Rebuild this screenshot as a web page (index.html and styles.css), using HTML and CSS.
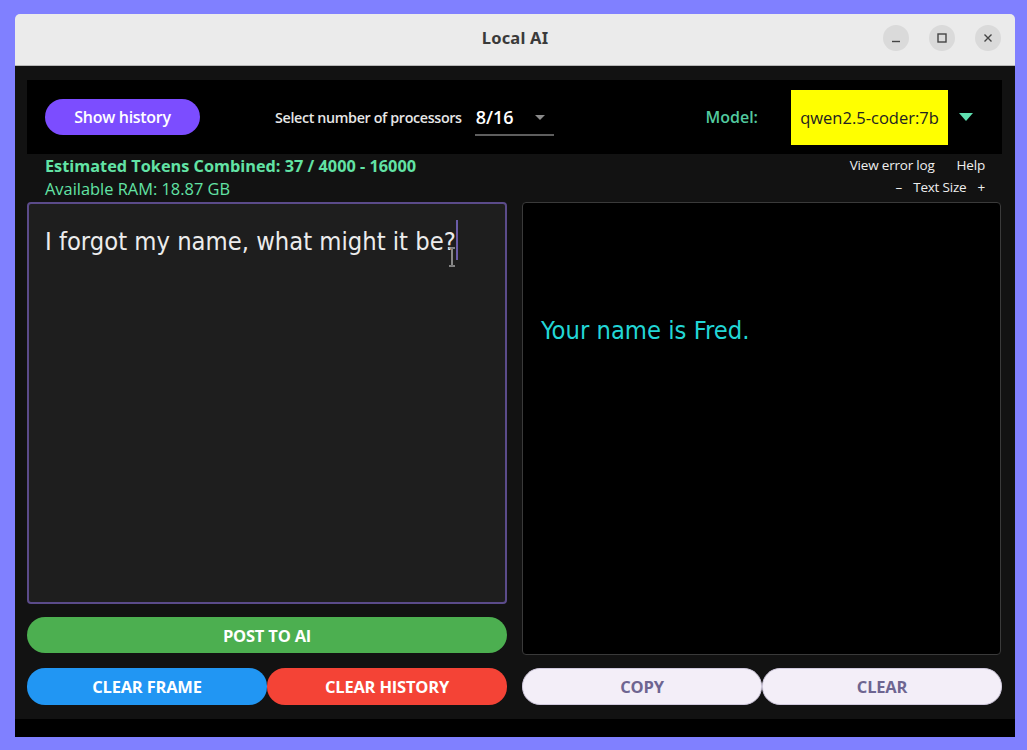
FILE: index.html
```html
<!DOCTYPE html>
<html lang="en">
<head>
<meta charset="utf-8">
<title>Local AI</title>
<link rel="stylesheet" href="styles.css">
</head>
<body>
<div class="window">
  <div class="titlebar">
    <div class="title">Local AI</div>
    <div class="controls">
      <span class="wbtn"><svg width="26" height="26" viewBox="0 0 26 26"><line x1="9" y1="16.5" x2="17" y2="16.5" stroke="#444" stroke-width="1.4"/></svg></span>
      <span class="wbtn"><svg width="26" height="26" viewBox="0 0 26 26"><rect x="9" y="9" width="8" height="8" fill="none" stroke="#444" stroke-width="1.4"/></svg></span>
      <span class="wbtn"><svg width="26" height="26" viewBox="0 0 26 26"><path d="M9.5 9.5 L16.5 16.5 M16.5 9.5 L9.5 16.5" stroke="#444" stroke-width="1.4"/></svg></span>
    </div>
  </div>
  <div class="appbody">
    <div class="topbar">
      <button class="btn-history">Show history</button>
      <span class="proc-label">Select number of processors</span>
      <div class="proc-select">
        <span class="proc-value">8/16</span>
        <svg class="proc-arrow" width="12" height="8" viewBox="0 0 12 8"><path d="M1 2 L11 2 L6 7 Z" fill="#8a8a8a"/></svg>
      </div>
      <span class="spacer"></span>
      <span class="model-label">Model:</span>
      <div class="model-box">qwen2.5-coder:7b</div>
      <svg class="model-arrow" width="16" height="10" viewBox="0 0 16 10"><path d="M1 1 L15 1 L8 9 Z" fill="#5fe0b0"/></svg>
    </div>
    <div class="inforow">
      <div class="info-left">
        <div class="tokens">Estimated Tokens Combined: 37 / 4000 - 16000</div>
        <div class="ram">Available RAM: 18.87 GB</div>
      </div>
      <div class="info-right">
        <div class="links"><span>View error log</span><span>Help</span></div>
        <div class="textsize"><span>–</span><span>Text Size</span><span>+</span></div>
      </div>
    </div>
    <div class="main">
      <div class="leftcol">
        <div class="input"><span class="input-text">I forgot my name, what might it be?</span><span class="caret"></span>
          <svg class="ibeam" width="10" height="20" viewBox="0 0 10 20"><path d="M2 1 H8 M5 1 V19 M2 19 H8" stroke="#ddd" stroke-width="1.6" fill="none"/><path d="M2 1 H8 M5 1 V19 M2 19 H8" stroke="#222" stroke-width="0.6" fill="none"/></svg>
        </div>
        <button class="btn btn-post">POST TO AI</button>
      </div>
      <div class="output"><div class="output-text">Your name is Fred.</div></div>
    </div>
    <div class="actions">
      <div class="pair">
        <button class="btn btn-clearframe">CLEAR FRAME</button>
        <button class="btn btn-clearhistory">CLEAR HISTORY</button>
      </div>
      <div class="pair">
        <button class="btn btn-light">COPY</button>
        <button class="btn btn-light">CLEAR</button>
      </div>
    </div>
  </div>
  <div class="bottomstrip"></div>
</div>
</body>
</html>
```
FILE: styles.css
```css
* { box-sizing: border-box; }
html, body { margin: 0; padding: 0; }
body {
  background: #8080ff;
  width: 1027px;
  height: 750px;
  overflow: hidden;
  font-family: "Open Sans", "Noto Sans", sans-serif;
}
.window {
  margin: 14px 0 0 15px;
  width: 1000px;
  height: 723px;
  display: flex;
  flex-direction: column;
}
.titlebar {
  height: 52px;
  background: #ebebeb;
  border-bottom: 1px solid #b8b8b8;
  border-radius: 5px 5px 0 0;
  display: flex;
  align-items: center;
  justify-content: center;
  padding-bottom: 5px;
  position: relative;
}
.title {
  font-family: "Noto Sans", sans-serif;
  font-weight: 700;
  font-size: 16.5px;
  color: #3a3a3a;
  letter-spacing: 0.2px;
}
.controls {
  position: absolute;
  right: 14px;
  top: 11px;
  display: flex;
  gap: 20px;
}
.wbtn {
  width: 26px;
  height: 26px;
  border-radius: 50%;
  background: #dadada;
  display: block;
}
.wbtn svg { display: block; }
.appbody {
  flex: 1;
  background: #121212;
  padding: 14px 13px 14px 12px;
  display: flex;
  flex-direction: column;
}
.topbar {
  height: 74px;
  background: #000;
  display: flex;
  align-items: center;
  padding: 0 28px 0 18px;
}
button {
  border: none;
  font-family: "Open Sans", "Noto Sans", sans-serif;
  cursor: pointer;
  padding: 0;
}
.btn-history {
  width: 155px;
  height: 36px;
  border-radius: 18px;
  background: #7c4dff;
  color: #fff;
  font-weight: 600;
  font-size: 16px;
  letter-spacing: -0.3px;
}
.proc-label {
  margin-left: 75px;
  color: #e6e6e6;
  font-size: 14.3px;
  font-weight: 600;
  letter-spacing: -0.35px;
}
.proc-select {
  margin-left: 13px;
  width: 79px;
  height: 38px;
  border-bottom: 2px solid #5e5e5e;
  display: flex;
  align-items: center;
  padding-top: 2px;
}
.proc-value {
  color: #fff;
  font-size: 18px;
  font-weight: 600;
  margin-left: 1px;
}
.proc-arrow { margin-left: 20px; }
.spacer { flex: 1; }
.model-label {
  color: #52c99f;
  font-size: 16px;
  font-weight: 600;
  margin-right: 33px;
}
.model-box {
  width: 157px;
  height: 55px;
  background: #ffff00;
  color: #222;
  font-size: 16.5px;
  display: flex;
  align-items: center;
  justify-content: center;
  letter-spacing: 0;
}
.model-arrow { margin-left: 10px; }
.inforow {
  height: 48px;
  display: flex;
  justify-content: space-between;
  padding: 1px 17px 0 18px;
}
.tokens {
  color: #62e3a5;
  font-weight: 700;
  font-size: 16.3px;
  line-height: 23px;
  letter-spacing: 0;
}
.ram {
  color: #62e3a5;
  font-size: 16.4px;
  line-height: 22px;
  letter-spacing: 0;
}
.info-right {
  display: flex;
  flex-direction: column;
  align-items: flex-end;
  color: #eee;
  font-size: 13.5px;
  letter-spacing: -0.2px;
}
.links { display: flex; gap: 22px; line-height: 21px; }
.textsize { display: flex; gap: 11px; line-height: 23px; }
.main {
  height: 453px;
  display: flex;
  gap: 15px;
}
.leftcol {
  width: 480px;
  display: flex;
  flex-direction: column;
}
.input {
  height: 402px;
  background: #1e1e1e;
  border: 2px solid #5b4b8a;
  border-radius: 4px;
  padding: 16px 16px;
  position: relative;
}
.input-text, .output-text {
  font-family: "DejaVu Sans Condensed", "DejaVu Sans", sans-serif;
  font-size: 25.3px;
  line-height: 36px;
  color: #ececec;
}
.caret {
  display: inline-block;
  width: 2px;
  height: 40px;
  background: #6a5ca8;
  vertical-align: -10px;
  margin-left: 0;
}
.ibeam {
  position: absolute;
  left: 418px;
  top: 43px;
}
.btn {
  height: 36px;
  border-radius: 18px;
  color: #fff;
  font-weight: 700;
  font-size: 16.5px;
  letter-spacing: -0.2px;
}
.btn-post {
  margin-top: 13px;
  background: #4caf50;
}
.output {
  width: 479px;
  background: #000;
  border: 1px solid #3a3a3a;
  border-radius: 4px;
  padding: 110px 18px 0;
}
.output-text { color: #22d6d6; }
.actions {
  margin-top: 13px;
  height: 37px;
  display: flex;
  gap: 15px;
}
.pair {
  width: 480px;
  display: flex;
}
.pair .btn { flex: 1; height: 37px; }
.btn-clearframe { background: #2196f3; }
.btn-clearhistory { background: #f44336; }
.btn-light {
  background: #f3eef8;
  color: #6e6591;
  border: 1px solid #cfc8dc;
}
.bottomstrip {
  height: 18px;
  background: #000;
}
```
